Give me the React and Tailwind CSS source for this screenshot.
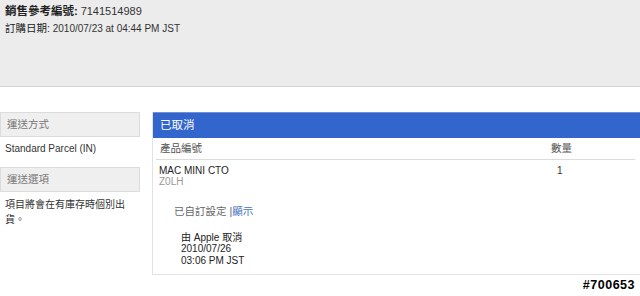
import React from "react";

const font = { fontFamily: '"Liberation Sans", Arial, "Noto Sans CJK TC", sans-serif' };

function SideHeader({ children }) {
  return (
    <div className="h-[25px] flex items-center pl-[6px] bg-[#efefef] border border-[#dcdcdc] text-[10.5px] text-[#777]">
      {children}
    </div>
  );
}

export default function App() {
  return (
    <div className="w-[640px] h-[296px] bg-white overflow-hidden relative text-[#333]" style={font}>
      {/* Order summary */}
      <div className="h-[87px] bg-[#ececec] border-b border-[#d4d4d4] pl-[5px] pt-[3px] text-[10px] leading-[16px]">
        <div>
          <span className="font-bold text-[11.5px] text-[#222]">銷售參考編號:</span>{" "}
          <span className="text-[11px]">7141514989</span>
        </div>
        <div>
          <span className="text-[10.5px] text-[#222]">訂購日期:</span> 2010/07/23 at 04:44 PM JST
        </div>
      </div>

      <div className="flex mt-[25px]">
        {/* Shipping */}
        <div className="w-[140px] shrink-0">
          <SideHeader>運送方式</SideHeader>
          <div className="pl-[5px] pt-[4px] h-[30px] text-[10px] leading-[16px] text-[#333]">
            Standard Parcel (IN)
          </div>
          <SideHeader>運送選項</SideHeader>
          <div className="pl-[5px] pt-[5px] pr-[10px] text-[10px] leading-[15px] text-[#333]">
            項目將會在有庫存時個別出貨。
          </div>
        </div>

        {/* Cancelled items */}
        <div className="ml-[12px] w-[500px] h-[163px] border-l border-b border-[#e2e2e2]">
          <div className="h-[26px] bg-[#3366cc] border-t border-[#6f8fd6] flex items-center pl-[7px] text-[11.5px] text-white">
            已取消
          </div>
          <div className="mx-[3px] w-[479px]">
            <div className="h-[22px] flex items-center border-b border-[#dcdcdc] text-[10.5px] text-[#555]">
              <div className="pl-[4px] flex-1">產品編號</div>
              <div className="w-[84px]">數量</div>
            </div>
            <div className="flex pt-[5px] text-[10px] leading-[11px]">
              <div className="pl-[3px] flex-1">
                <div className="text-[#222]">MAC MINI CTO</div>
                <div className="text-[#999]">Z0LH</div>
              </div>
              <div className="w-[78px] text-[#333]">1</div>
            </div>
            <div className="pl-[18px] pt-[17px] text-[10.5px] text-[#666]">
              已自訂設定 |<span className="text-[#3d6fc6]">顯示</span>
            </div>
            <div className="pl-[25px] pt-[12px] text-[10px] leading-[11.5px] text-[#222]">
              <div>由 Apple 取消</div>
              <div>2010/07/26</div>
              <div>03:06 PM JST</div>
            </div>
          </div>
        </div>
      </div>

      {/* Watermark */}
      <div
        className="absolute right-[5px] top-[276px] text-[12.5px] font-bold text-black tracking-[0.5px]"
        style={{ textShadow: "1px 0 #fff, -1px 0 #fff, 0 1px #fff, 0 -1px #fff" }}
      >
        #700653
      </div>
    </div>
  );
}
